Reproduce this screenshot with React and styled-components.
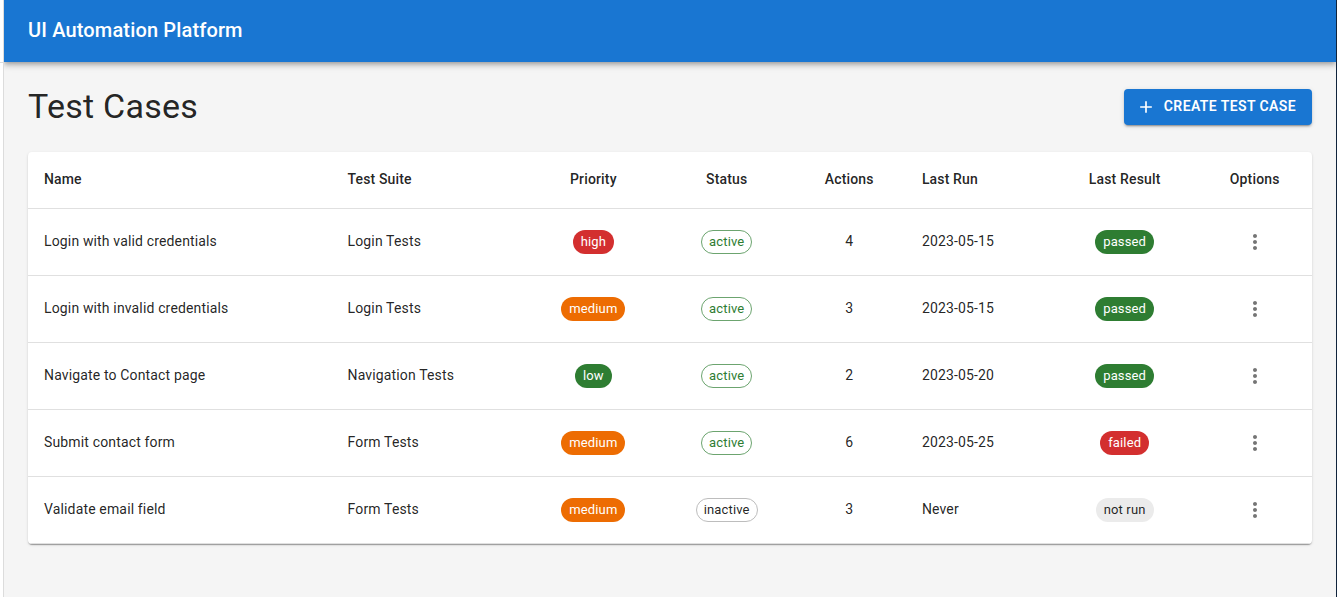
import React from 'react';
import styled, { createGlobalStyle } from 'styled-components';

const GlobalStyle = createGlobalStyle`
  *, *::before, *::after {
    box-sizing: border-box;
  }

  body {
    margin: 0;
    background: #fff;
    color: rgba(0, 0, 0, 0.87);
    font-family: Roboto, "Liberation Sans", sans-serif;
    font-size: 14px;
    line-height: 20px;
  }
`;

const Page = styled.div`
  min-height: 100vh;
  display: grid;
  grid-template-columns: 4px minmax(0, 1fr) 1px;
`;

const LeftEdge = styled.div`
  display: flex;
  flex-direction: column;
  border-right: 1px solid #dcdcdc;
`;

const EdgeTop = styled.div`
  height: 63px;
  border-bottom: 1px solid #dcdcdc;
`;

const RightEdge = styled.div`
  background: #10243c;
`;

const Shell = styled.div`
  display: flex;
  flex-direction: column;
  background: #f5f5f5;
  overflow: hidden;
`;

const AppBar = styled.header`
  display: flex;
  align-items: center;
  height: 62px;
  padding: 0 24px 2px;
  background: #1976d2;
  color: #fff;
  box-shadow: 0 2px 4px -1px rgba(0, 0, 0, 0.2), 0 4px 5px 0 rgba(0, 0, 0, 0.14),
    0 1px 10px 0 rgba(0, 0, 0, 0.12);
`;

const Brand = styled.div`
  font-size: 20px;
  line-height: 32px;
  font-weight: 500;
  letter-spacing: 0.0075em;
`;

const Content = styled.main`
  padding: 24px;
`;

const TitleRow = styled.div`
  display: flex;
  align-items: center;
  justify-content: space-between;
  margin-bottom: 24px;
`;

const Title = styled.h1`
  margin: 0;
  padding-bottom: 2px;
  font-size: 34px;
  line-height: 40px;
  font-weight: 400;
  letter-spacing: 0.00735em;
`;

const CreateButton = styled.button`
  display: inline-flex;
  align-items: center;
  gap: 8px;
  height: 36px;
  padding: 0 16px 0 12px;
  border: 0;
  border-radius: 4px;
  background: #1976d2;
  color: #fff;
  font: inherit;
  font-weight: 600;
  letter-spacing: 0.02857em;
  text-transform: uppercase;
  cursor: pointer;
  box-shadow: 0 3px 1px -2px rgba(0, 0, 0, 0.2), 0 2px 2px 0 rgba(0, 0, 0, 0.14),
    0 1px 5px 0 rgba(0, 0, 0, 0.12);
`;

const ButtonLabel = styled.span`
  padding-bottom: 2px;
`;

const Card = styled.div`
  border-radius: 4px;
  background: #fff;
  overflow: hidden;
  box-shadow: 0 2px 1px -1px rgba(0, 0, 0, 0.2), 0 1px 1px 0 rgba(0, 0, 0, 0.14),
    0 1px 3px 0 rgba(0, 0, 0, 0.12);
`;

const Table = styled.table`
  width: 100%;
  border-collapse: collapse;
  border-spacing: 0;
`;

const HeadCell = styled.th`
  padding: 16px 16px 18px;
  border-bottom: 1px solid #e0e0e0;
  text-align: ${(p) => (p.$center ? 'center' : 'left')};
  font-weight: 500;
  line-height: 22px;
  letter-spacing: 0.01071em;
`;

const Cell = styled.td`
  padding: 16px;
  border-bottom: 1px solid #e0e0e0;
  text-align: ${(p) => (p.$center ? 'center' : 'left')};
  vertical-align: middle;
  letter-spacing: 0.01071em;
`;

const TextCell = styled(Cell)`
  padding-bottom: 18px;
`;

const chipTones = {
  error: { background: '#d32f2f', color: '#fff' },
  warning: { background: '#ed6c02', color: '#fff' },
  success: { background: '#2e7d32', color: '#fff' },
  neutral: { background: '#ebebeb', color: 'rgba(0, 0, 0, 0.87)' },
  successOutline: { background: 'transparent', color: '#2e7d32', border: 'rgba(46, 125, 50, 0.7)' },
  neutralOutline: { background: 'transparent', color: 'rgba(0, 0, 0, 0.87)', border: '#bdbdbd' },
};

const Chip = styled.span`
  display: inline-flex;
  align-items: center;
  height: 24px;
  padding: 0 ${(p) => (chipTones[p.$tone].border ? 7 : 8)}px;
  border: ${(p) => (chipTones[p.$tone].border ? `1px solid ${chipTones[p.$tone].border}` : '0')};
  border-radius: 16px;
  background: ${(p) => chipTones[p.$tone].background};
  color: ${(p) => chipTones[p.$tone].color};
  font-size: 13px;
  vertical-align: middle;
  white-space: nowrap;
`;

const IconButton = styled.button`
  display: inline-flex;
  padding: 5px;
  border: 0;
  border-radius: 50%;
  background: transparent;
  color: rgba(0, 0, 0, 0.54);
  vertical-align: middle;
  cursor: pointer;
`;

const Icon = styled.svg`
  width: ${(p) => p.$size}px;
  height: ${(p) => p.$size}px;
  fill: currentColor;
`;

const AddIcon = () => (
  <Icon $size={20} viewBox="0 0 24 24" aria-hidden="true">
    <path d="M19 13h-6v6h-2v-6H5v-2h6V5h2v6h6z" />
  </Icon>
);

const MoreIcon = () => (
  <Icon $size={24} viewBox="0 0 24 24" aria-hidden="true">
    <path d="M12 8c1.1 0 2-.9 2-2s-.9-2-2-2-2 .9-2 2 .9 2 2 2m0 2c-1.1 0-2 .9-2 2s.9 2 2 2 2-.9 2-2-.9-2-2-2m0 6c-1.1 0-2 .9-2 2s.9 2 2 2 2-.9 2-2-.9-2-2-2" />
  </Icon>
);

const columns = [
  { label: 'Name' },
  { label: 'Test Suite' },
  { label: 'Priority', center: true },
  { label: 'Status', center: true },
  { label: 'Actions', center: true },
  { label: 'Last Run' },
  { label: 'Last Result', center: true },
  { label: 'Options', center: true },
];

const priorityTone = { high: 'error', medium: 'warning', low: 'success' };
const statusTone = { active: 'successOutline', inactive: 'neutralOutline' };
const resultTone = { passed: 'success', failed: 'error', 'not run': 'neutral' };

const testCases = [
  { name: 'Login with valid credentials', suite: 'Login Tests', priority: 'high', status: 'active', actions: 4, lastRun: '2023-05-15', result: 'passed' },
  { name: 'Login with invalid credentials', suite: 'Login Tests', priority: 'medium', status: 'active', actions: 3, lastRun: '2023-05-15', result: 'passed' },
  { name: 'Navigate to Contact page', suite: 'Navigation Tests', priority: 'low', status: 'active', actions: 2, lastRun: '2023-05-20', result: 'passed' },
  { name: 'Submit contact form', suite: 'Form Tests', priority: 'medium', status: 'active', actions: 6, lastRun: '2023-05-25', result: 'failed' },
  { name: 'Validate email field', suite: 'Form Tests', priority: 'medium', status: 'inactive', actions: 3, lastRun: 'Never', result: 'not run' },
];

export default function App() {
  return (
    <>
      <GlobalStyle />
      <Page>
        <LeftEdge>
          <EdgeTop />
        </LeftEdge>
        <Shell>
          <AppBar>
            <Brand>UI Automation Platform</Brand>
          </AppBar>
          <Content>
            <TitleRow>
              <Title>Test Cases</Title>
              <CreateButton type="button">
                <AddIcon />
                <ButtonLabel>Create Test Case</ButtonLabel>
              </CreateButton>
            </TitleRow>
            <Card>
              <Table>
                <thead>
                  <tr>
                    {columns.map((c) => (
                      <HeadCell key={c.label} scope="col" $center={c.center}>
                        {c.label}
                      </HeadCell>
                    ))}
                  </tr>
                </thead>
                <tbody>
                  {testCases.map((t) => (
                    <tr key={t.name}>
                      <TextCell>{t.name}</TextCell>
                      <TextCell>{t.suite}</TextCell>
                      <Cell $center>
                        <Chip $tone={priorityTone[t.priority]}>{t.priority}</Chip>
                      </Cell>
                      <Cell $center>
                        <Chip $tone={statusTone[t.status]}>{t.status}</Chip>
                      </Cell>
                      <TextCell $center>{t.actions}</TextCell>
                      <TextCell>{t.lastRun}</TextCell>
                      <Cell $center>
                        <Chip $tone={resultTone[t.result]}>{t.result}</Chip>
                      </Cell>
                      <Cell $center>
                        <IconButton type="button" aria-label={`Options for ${t.name}`}>
                          <MoreIcon />
                        </IconButton>
                      </Cell>
                    </tr>
                  ))}
                </tbody>
              </Table>
            </Card>
          </Content>
        </Shell>
        <RightEdge />
      </Page>
    </>
  );
}
